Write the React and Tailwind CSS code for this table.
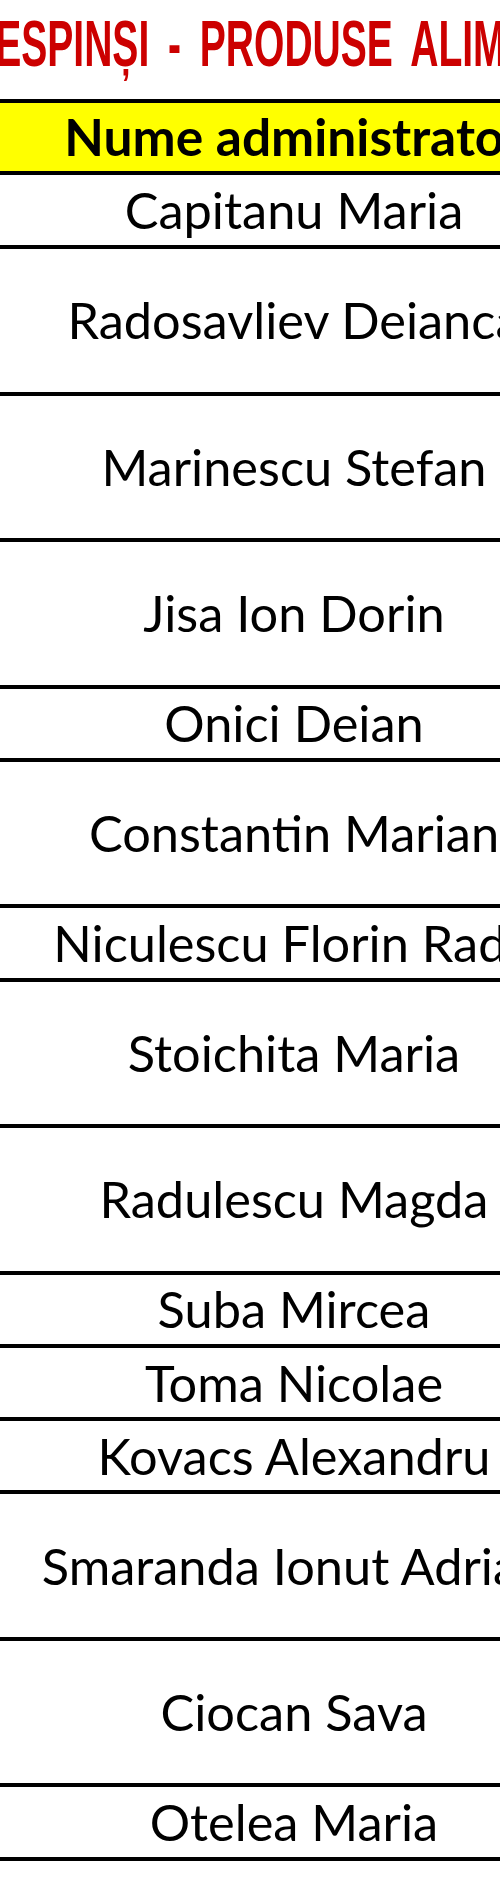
import React from "react";

const rows = [
  { name: "Capitanu Maria", h: "h-[74px]" },
  { name: "Radosavliev Deianca", h: "h-[146.5px]" },
  { name: "Marinescu Stefan", h: "h-[146.5px]" },
  { name: "Jisa Ion Dorin", h: "h-[146.5px]" },
  { name: "Onici Deian", h: "h-[73.25px]" },
  { name: "Constantin Marian", h: "h-[146.5px]" },
  { name: "Niculescu Florin Radu", h: "h-[73.25px]" },
  { name: "Stoichita Maria", h: "h-[146.5px]" },
  { name: "Radulescu Magda", h: "h-[146.5px]" },
  { name: "Suba Mircea", h: "h-[73.25px]" },
  { name: "Toma Nicolae", h: "h-[73.25px]" },
  { name: "Kovacs Alexandru", h: "h-[73.25px]" },
  { name: "Smaranda Ionut Adrian", h: "h-[146.5px]" },
  { name: "Ciocan Sava", h: "h-[146.5px]" },
  { name: "Otelea Maria", h: "h-[73.25px]" },
];

const App = () => {
  return (
    <div className="w-[500px] h-[1890px] overflow-hidden bg-white">
      {/* title, cut at both sides like the sheet */}
      <div className="pt-[12px] h-[99px] whitespace-nowrap">
        <span
          className="inline-block origin-left scale-x-[0.61] ml-[-33px] text-[64px] leading-[64px] font-bold text-[#cc0000] [word-spacing:13px]"
          style={{ fontFamily: '"Liberation Sans", Arial, sans-serif' }}
        >
          RESPINȘI - PRODUSE ALIMENTARE
        </span>
      </div>

      <div
        className="w-[588px] border-t-4 border-black text-black"
        style={{ fontFamily: 'Lato, "Open Sans", sans-serif' }}
      >
        <div className="h-[72px] bg-[#ffff00] border-b-4 border-black flex items-center justify-center whitespace-nowrap text-[51.5px] font-bold">
          Nume administrator
        </div>
        {rows.map((r) => (
          <div
            key={r.name}
            className={`${r.h} border-b-4 border-black flex items-center justify-center whitespace-nowrap text-[50.5px]`}
          >
            {r.name}
          </div>
        ))}
      </div>
    </div>
  );
};

export default App;
